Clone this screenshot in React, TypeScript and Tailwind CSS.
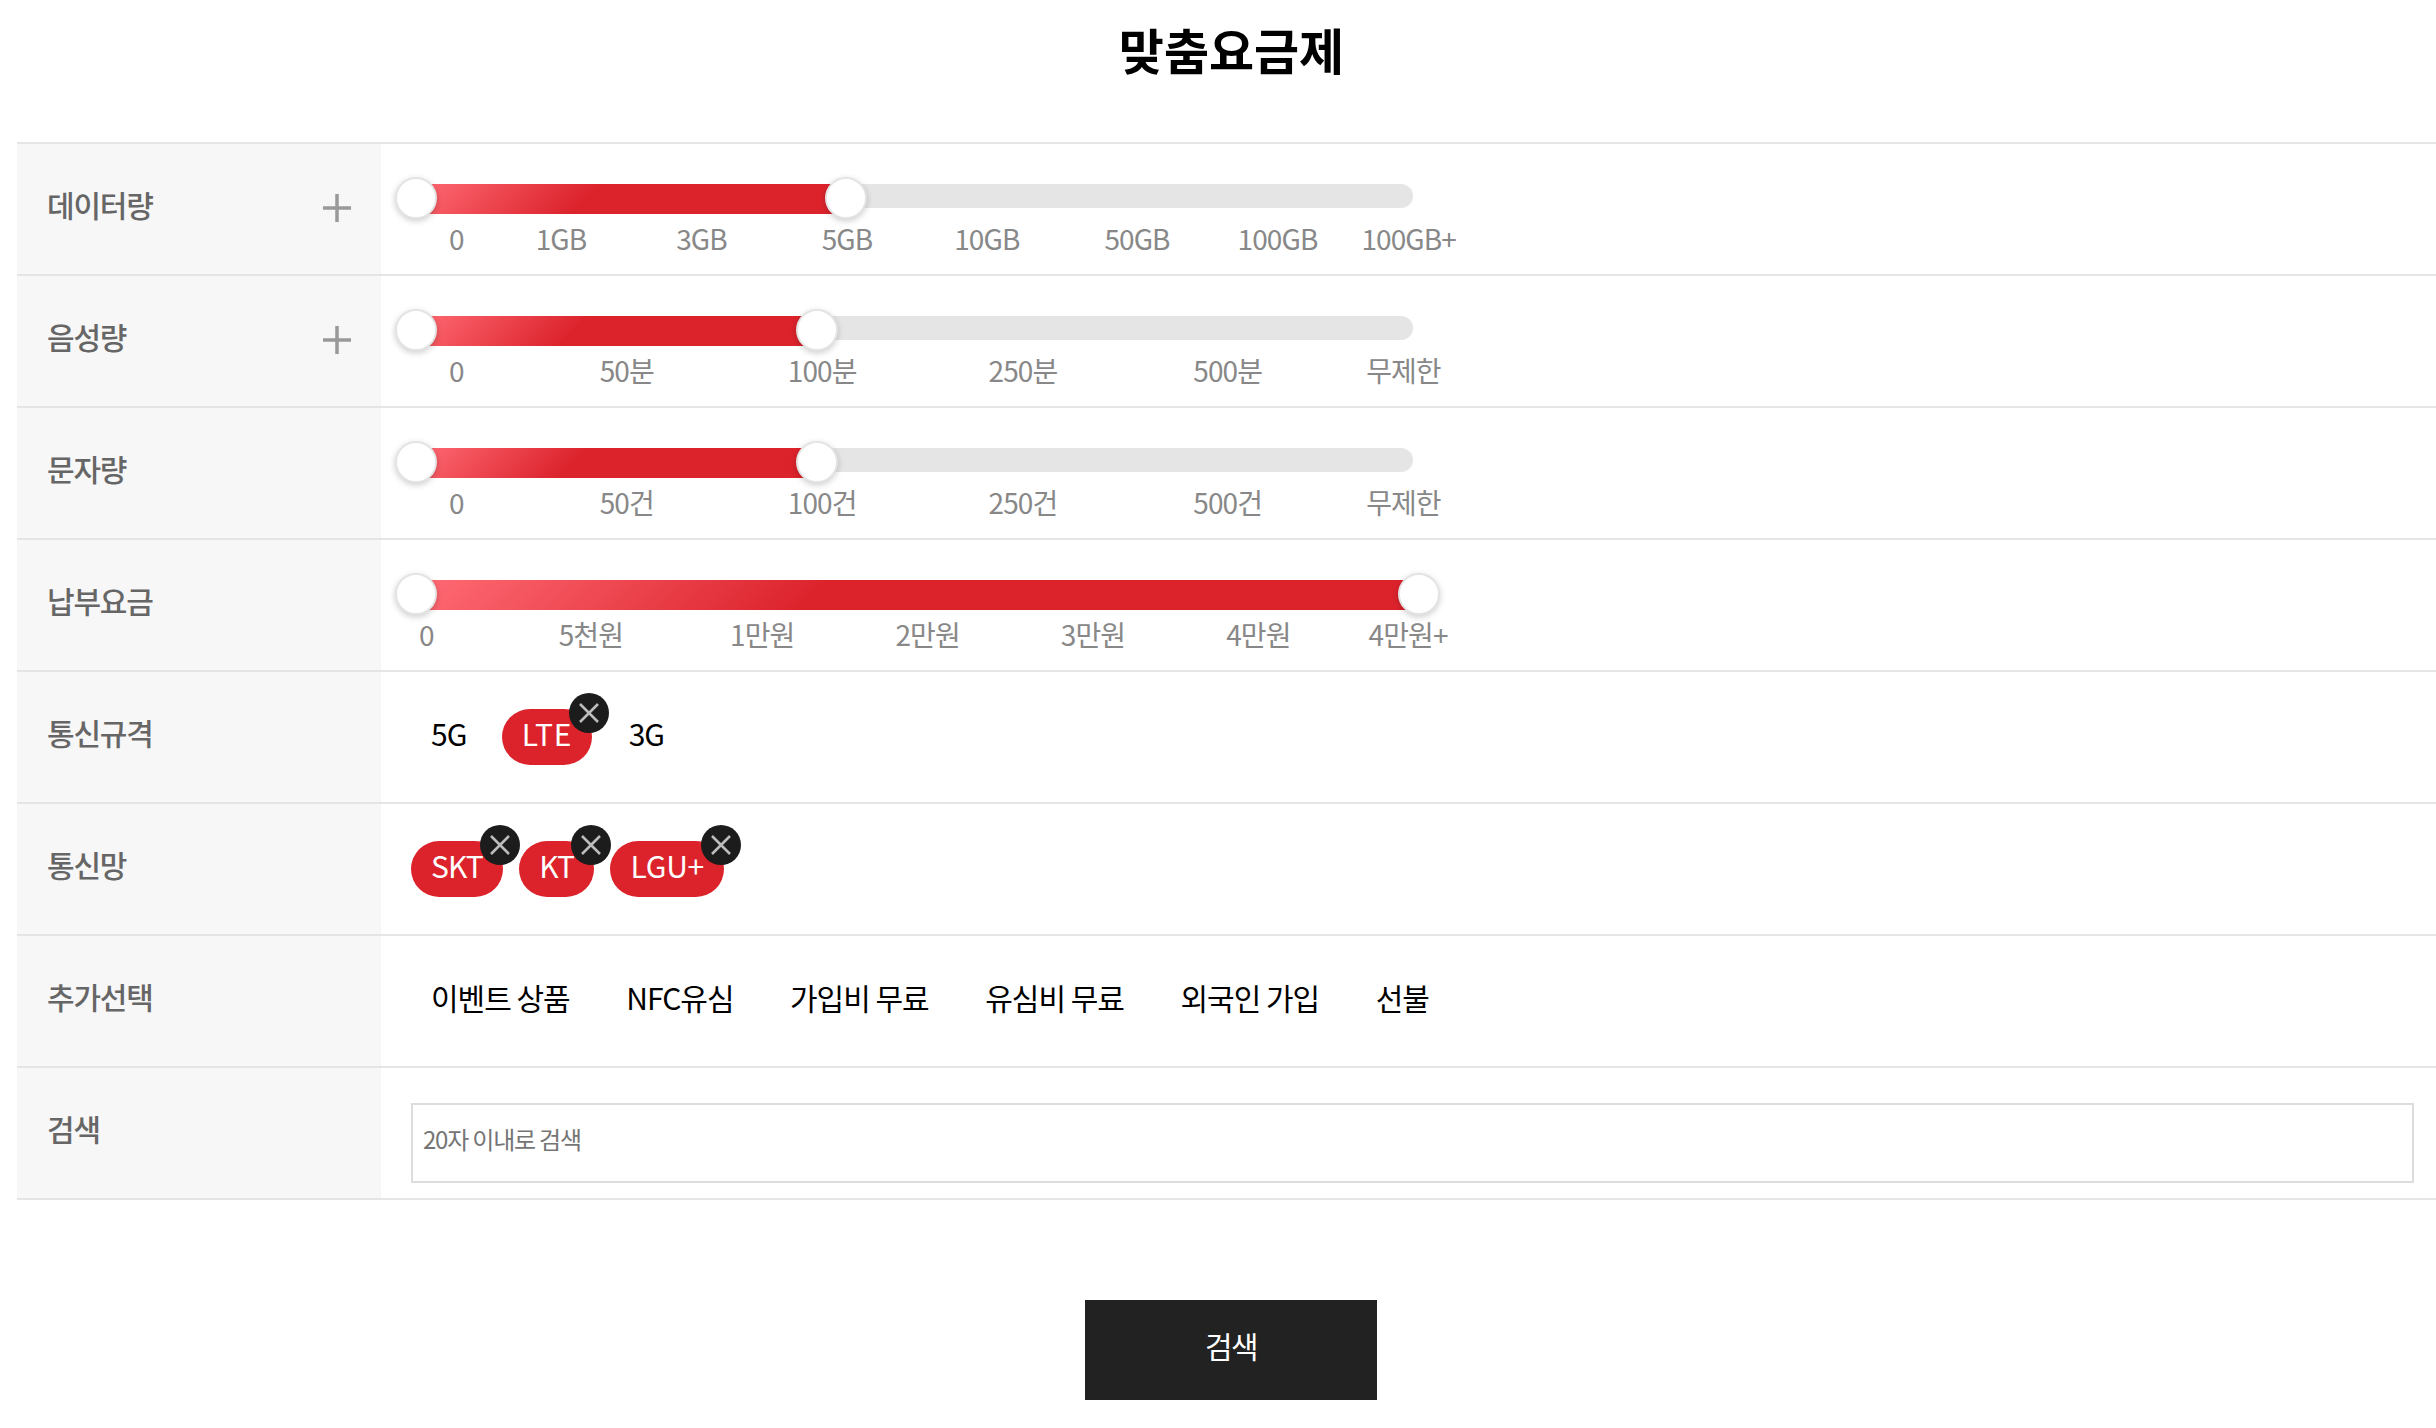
import { Plus } from "lucide-react"

interface Tick {
  label: string
  className: string
}

interface SliderProps {
  fill: string
  endThumb: string
  ticks: Tick[]
}

const dataTicks: Tick[] = [
  { label: "0", className: "ml-[68px]" },
  { label: "1GB", className: "ml-[72px]" },
  { label: "3GB", className: "ml-[90px]" },
  { label: "5GB", className: "ml-[95px]" },
  { label: "10GB", className: "ml-[82px]" },
  { label: "50GB", className: "ml-[85px]" },
  { label: "100GB", className: "ml-[68px]" },
  { label: "100GB+", className: "ml-[44px]" },
]

const voiceTicks: Tick[] = [
  { label: "0", className: "ml-[68px]" },
  { label: "50분", className: "ml-[136px]" },
  { label: "100분", className: "ml-[134px]" },
  { label: "250분", className: "ml-[132px]" },
  { label: "500분", className: "ml-[136px]" },
  { label: "무제한", className: "ml-[104px]" },
]

const smsTicks: Tick[] = [
  { label: "0", className: "ml-[68px]" },
  { label: "50건", className: "ml-[136px]" },
  { label: "100건", className: "ml-[134px]" },
  { label: "250건", className: "ml-[132px]" },
  { label: "500건", className: "ml-[136px]" },
  { label: "무제한", className: "ml-[104px]" },
]

const feeTicks: Tick[] = [
  { label: "0", className: "ml-[38px]" },
  { label: "5천원", className: "ml-[125px]" },
  { label: "1만원", className: "ml-[107px]" },
  { label: "2만원", className: "ml-[101px]" },
  { label: "3만원", className: "ml-[101px]" },
  { label: "4만원", className: "ml-[101px]" },
  { label: "4만원+", className: "ml-[78px]" },
]

function Thumb({ className }: { className: string }) {
  return (
    <span
      className={`absolute top-[-7px] w-[42px] h-[42px] rounded-full bg-white border-2 border-[#e4e4e4] shadow-[0_2px_6px_rgba(0,0,0,0.2)] ${className}`}
    />
  )
}

function RangeSlider({ fill, endThumb, ticks }: SliderProps) {
  return (
    <div className="flex-1 pt-[40px]">
      <div className="relative ml-[35px] w-[997px] h-[30px]">
        <div className="h-6 rounded-r-full bg-[#e5e5e5]" />
        <div className={`absolute left-0 top-0 h-[30px] bg-[linear-gradient(135deg,#ff6b75_0%,#dc232c_40%)] ${fill}`} />
        <Thumb className="left-[-21px]" />
        <Thumb className={endThumb} />
      </div>
      <div className="flex mt-[8px] text-[28px] leading-[32px] tracking-[-0.9px] text-[#888888] whitespace-nowrap">
        {ticks.map((tick) => (
          <span key={tick.label} className={tick.className}>
            {tick.label}
          </span>
        ))}
      </div>
    </div>
  )
}

function Chip({ label, selected, className = "" }: { label: string; selected?: boolean; className?: string }) {
  return (
    <div
      className={
        selected
          ? `relative flex items-center h-14 px-5 pb-[8px] rounded-full bg-[#dc232c] text-white ${className}`
          : `flex items-center h-14 px-5 pb-[8px] text-black ${className}`
      }
    >
      {label}
      {selected && (
        <span className="absolute top-[-16px] right-[-17px] flex items-center justify-center w-10 h-10 rounded-full bg-[#1c1c1c]">
          <svg width="20" height="20" viewBox="0 0 20 20" fill="none" stroke="#bdbdbd" strokeWidth="2.5">
            <path d="M1 1L19 19M19 1L1 19" />
          </svg>
        </span>
      )}
    </div>
  )
}

function ChipGroup({ children }: { children: React.ReactNode }) {
  return (
    <div className="flex-1 flex items-center gap-[16.5px] px-[30px] text-[30px] tracking-[-1px] whitespace-nowrap">
      {children}
    </div>
  )
}

function Row({ label, expandable, children }: { label: string; expandable?: boolean; children: React.ReactNode }) {
  return (
    <div className="flex h-[132px] border-b-2 border-[#e5e5e5]">
      <div className="flex items-center justify-between w-[364px] pl-[30px] pr-[20px] bg-[#f7f7f7] text-[30px] font-medium tracking-[-1.2px] text-[#666666]">
        <span className="block pb-[9px]">{label}</span>
        {expandable && (
          <Plus
            size={48}
            strokeWidth={3.5}
            absoluteStrokeWidth
            strokeLinecap="butt"
            className="mb-[3px] text-[#999999]"
          />
        )}
      </div>
      {children}
    </div>
  )
}

export default function App() {
  return (
    <div className="pl-[17px] bg-white font-['Noto_Sans_CJK_KR','Noto_Sans',sans-serif]">
      <div className="flex items-center justify-center h-[97px] pl-[10px] text-[49px] font-bold text-black">
        맞춤요금제
      </div>
      <div className="mt-[45px] border-t-2 border-[#e5e5e5]">
        <Row label="데이터량" expandable>
          <RangeSlider fill="w-[430px]" endThumb="left-[409px]" ticks={dataTicks} />
        </Row>
        <Row label="음성량" expandable>
          <RangeSlider fill="w-[401px]" endThumb="left-[380px]" ticks={voiceTicks} />
        </Row>
        <Row label="문자량">
          <RangeSlider fill="w-[401px]" endThumb="left-[380px]" ticks={smsTicks} />
        </Row>
        <Row label="납부요금">
          <RangeSlider fill="w-[1003px]" endThumb="left-[982px]" ticks={feeTicks} />
        </Row>
        <Row label="통신규격">
          <ChipGroup>
            <Chip label="5G" />
            <Chip label="LTE" selected className="-ml-[1px] tracking-[0.8px]" />
            <Chip label="3G" />
          </ChipGroup>
        </Row>
        <Row label="통신망">
          <ChipGroup>
            <Chip label="SKT" selected />
            <Chip label="KT" selected />
            <Chip label="LGU+" selected className="tracking-[-0.2px]" />
          </ChipGroup>
        </Row>
        <Row label="추가선택">
          <ChipGroup>
            <Chip label="이벤트 상품" />
            <Chip label="NFC유심" />
            <Chip label="가입비 무료" />
            <Chip label="유심비 무료" />
            <Chip label="외국인 가입" />
            <Chip label="선불" />
          </ChipGroup>
        </Row>
        <Row label="검색">
          <div className="flex-1 flex items-center pl-[30px] pr-[22px] pt-[20px]">
            <input
              placeholder="20자 이내로 검색"
              className="w-full h-20 px-[10px] pb-[9px] border-2 border-[#dddddd] text-[24px] tracking-[-0.05em] placeholder:text-[#757575]"
            />
          </div>
        </Row>
      </div>
      <div className="flex justify-center pl-[9px] mt-[100px]">
        <button className="w-[292px] h-[100px] pb-[9px] bg-[#222222] text-white text-[30px] tracking-[-0.05em]">검색</button>
      </div>
    </div>
  )
}
